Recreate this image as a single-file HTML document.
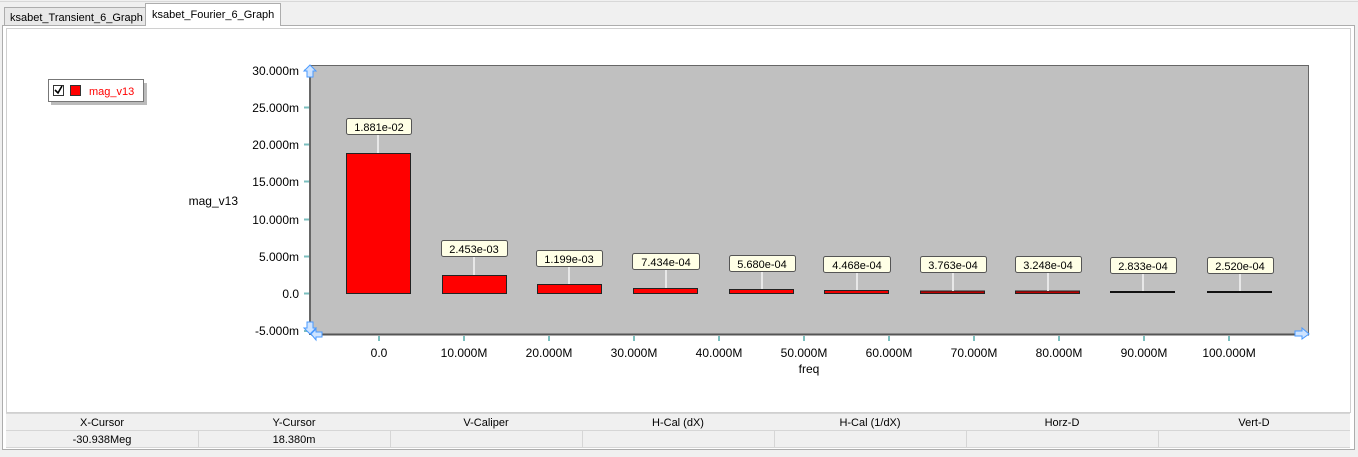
<!DOCTYPE html>
<html><head><style>
body{margin:0;width:1358px;height:452px;overflow:hidden;background:#f0f0f0;font-family:"Liberation Sans",sans-serif;}
</style></head><body>
<svg width="1358" height="452" xmlns="http://www.w3.org/2000/svg" font-family="Liberation Sans, sans-serif">
<rect x="0" y="0" width="1358" height="452" fill="#f0f0f0"/>
<line x1="0" y1="1.5" x2="1358" y2="1.5" stroke="#d8d8d8"/>
<rect x="4.5" y="7.5" width="141" height="18" fill="#e8e8e8" stroke="#adadad"/>
<text x="10" y="21" font-size="11" fill="#000">ksabet_Transient_6_Graph</text>
<rect x="145.5" y="3.5" width="135" height="23" fill="#fff" stroke="#adadad"/>
<text x="152" y="18" font-size="11" fill="#000">ksabet_Fourier_6_Graph</text>
<rect x="2.5" y="25.5" width="1352" height="424" fill="#fff" stroke="#adadad"/>
<line x1="146" y1="25.5" x2="280" y2="25.5" stroke="#fff"/>
<rect x="6.5" y="28.5" width="1344" height="384" fill="#fff" stroke="#d0d0d0"/>
<!-- legend -->
<rect x="51" y="83" width="96" height="22" fill="#bbb"/>
<rect x="48.5" y="79.5" width="95" height="22" fill="#fff" stroke="#777"/>
<rect x="53.5" y="85.5" width="10" height="10" fill="#fff" stroke="#333"/>
<path d="M55 90 L58 93 L62 86" stroke="#000" stroke-width="1.6" fill="none"/>
<rect x="70.5" y="85.5" width="10" height="10" fill="#f00" stroke="#333"/>
<text x="89" y="95" font-size="11" fill="#f00">mag_v13</text>
<!-- plot area -->
<rect x="310.5" y="65.5" width="998" height="269" fill="#c0c0c0" stroke="#666" stroke-width="1"/>
<line x1="311" y1="334.5" x2="1309" y2="334.5" stroke="#555" stroke-width="2"/>
<line x1="310" y1="66" x2="310" y2="335" stroke="#666" stroke-width="2"/>
<g font-size="12" fill="#000" text-anchor="end">
<text x="299" y="75">30.000m</text><text x="299" y="112">25.000m</text>
<text x="299" y="149">20.000m</text><text x="299" y="186">15.000m</text>
<text x="299" y="224">10.000m</text><text x="299" y="261">5.000m</text>
<text x="299" y="298">0.0</text><text x="299" y="335">-5.000m</text>
</g>
<g stroke="#7bbfbf" stroke-width="2">
<line x1="304" y1="70.5" x2="309" y2="70.5"/><line x1="304" y1="107.5" x2="309" y2="107.5"/>
<line x1="304" y1="144.5" x2="309" y2="144.5"/><line x1="304" y1="181.5" x2="309" y2="181.5"/>
<line x1="304" y1="219.5" x2="309" y2="219.5"/><line x1="304" y1="256.5" x2="309" y2="256.5"/>
<line x1="304" y1="293.5" x2="309" y2="293.5"/><line x1="304" y1="331" x2="309" y2="331"/>
</g>
<text x="238" y="205" font-size="12" text-anchor="end">mag_v13</text>
<path d="M307 77 L307 71 L304 71 L310 65 L316 71 L313 71 L313 77 Z" fill="#cfe4ff" stroke="#4a9aff"/>
<path d="M307 322 L307 328 L304 328 L310 334 L316 328 L313 328 L313 322 Z" fill="#cfe4ff" stroke="#4a9aff"/>
<path d="M314 331 L320 331 L320 328 L325 334 L320 339 L320 336 L314 336 Z" fill="#cfe4ff" stroke="#4a9aff" transform="rotate(180 318 334)"/>
<path d="M1295 331 L1302 331 L1302 328 L1309 334 L1302 339 L1302 336 L1295 336 Z" fill="#cfe4ff" stroke="#4a9aff"/>
<!-- x axis -->
<g stroke="#7bbfbf" stroke-width="2">
<line x1="379" y1="336" x2="379" y2="341"/><line x1="464" y1="336" x2="464" y2="341"/>
<line x1="549" y1="336" x2="549" y2="341"/><line x1="634" y1="336" x2="634" y2="341"/>
<line x1="719" y1="336" x2="719" y2="341"/><line x1="804" y1="336" x2="804" y2="341"/>
<line x1="889" y1="336" x2="889" y2="341"/><line x1="974" y1="336" x2="974" y2="341"/>
<line x1="1059" y1="336" x2="1059" y2="341"/><line x1="1144" y1="336" x2="1144" y2="341"/>
<line x1="1229" y1="336" x2="1229" y2="341"/>
</g>
<g font-size="12" text-anchor="middle">
<text x="379" y="357">0.0</text><text x="464" y="357">10.000M</text>
<text x="549" y="357">20.000M</text><text x="634" y="357">30.000M</text>
<text x="719" y="357">40.000M</text><text x="804" y="357">50.000M</text>
<text x="889" y="357">60.000M</text><text x="974" y="357">70.000M</text>
<text x="1059" y="357">80.000M</text><text x="1144" y="357">90.000M</text>
<text x="1229" y="357">100.000M</text>
<text x="809" y="373">freq</text>
</g>
<!-- bars -->
<g stroke="#222" stroke-width="1">
<rect x="346.5" y="153.5" width="64" height="140" fill="#f00"/>
<rect x="442.5" y="275.5" width="64" height="18" fill="#f00"/>
<rect x="537.5" y="284.5" width="64" height="9" fill="#f00"/>
<rect x="633.5" y="288.5" width="64" height="5" fill="#f00"/>
<rect x="729.5" y="289.5" width="64" height="4" fill="#f00"/>
<rect x="824.5" y="290.5" width="64" height="3" fill="#e00"/>
<rect x="920.5" y="291" width="64" height="2.5" fill="#b00"/>
<rect x="1015.5" y="291" width="64" height="2.5" fill="#b00"/>
</g>
<rect x="1110" y="291" width="65" height="2" fill="#111"/>
<rect x="1207" y="291" width="65" height="2" fill="#111"/>
<g stroke="#e8e8e8" stroke-width="2">
<line x1="378" y1="135" x2="378" y2="153"/><line x1="474" y1="257" x2="474" y2="275"/>
<line x1="569" y1="267" x2="569" y2="284"/><line x1="666" y1="270" x2="666" y2="288"/>
<line x1="762" y1="272" x2="762" y2="289"/><line x1="857" y1="273" x2="857" y2="290"/>
<line x1="953" y1="273" x2="953" y2="291"/><line x1="1048" y1="273" x2="1048" y2="291"/>
<line x1="1143" y1="274" x2="1143" y2="291"/><line x1="1240" y1="274" x2="1240" y2="291"/>
</g>
<g font-size="11" text-anchor="middle">
<g><rect x="346.5" y="118.5" width="65" height="16" rx="2" fill="#ffffe6" stroke="#555"/><text x="379" y="131">1.881e-02</text></g>
<g><rect x="441.5" y="240.5" width="66" height="16" rx="2" fill="#ffffe6" stroke="#555"/><text x="474" y="253">2.453e-03</text></g>
<g><rect x="536.5" y="250.5" width="66" height="16" rx="2" fill="#ffffe6" stroke="#555"/><text x="569" y="263">1.199e-03</text></g>
<g><rect x="632.5" y="253.5" width="67" height="16" rx="2" fill="#ffffe6" stroke="#555"/><text x="666" y="266">7.434e-04</text></g>
<g><rect x="729.5" y="255.5" width="66" height="16" rx="2" fill="#ffffe6" stroke="#555"/><text x="762" y="268">5.680e-04</text></g>
<g><rect x="823.5" y="256.5" width="67" height="16" rx="2" fill="#ffffe6" stroke="#555"/><text x="857" y="269">4.468e-04</text></g>
<g><rect x="920.5" y="256.5" width="66" height="16" rx="2" fill="#ffffe6" stroke="#555"/><text x="953" y="269">3.763e-04</text></g>
<g><rect x="1015.5" y="256.5" width="66" height="16" rx="2" fill="#ffffe6" stroke="#555"/><text x="1048" y="269">3.248e-04</text></g>
<g><rect x="1110.5" y="257.5" width="66" height="16" rx="2" fill="#ffffe6" stroke="#555"/><text x="1143" y="270">2.833e-04</text></g>
<g><rect x="1207.5" y="257.5" width="66" height="16" rx="2" fill="#ffffe6" stroke="#555"/><text x="1240" y="270">2.520e-04</text></g>
</g>
<!-- bottom table -->
<rect x="6" y="413" width="1344" height="35" fill="#f0f0f0"/>
<line x1="6" y1="413.5" x2="1350" y2="413.5" stroke="#d6d6d6"/>
<line x1="6" y1="430.5" x2="1350" y2="430.5" stroke="#d6d6d6"/>
<line x1="6" y1="447.5" x2="1350" y2="447.5" stroke="#d6d6d6"/>
<g stroke="#d6d6d6">
<line x1="198.5" y1="431" x2="198.5" y2="447"/><line x1="390.5" y1="431" x2="390.5" y2="447"/>
<line x1="582.5" y1="431" x2="582.5" y2="447"/><line x1="774.5" y1="431" x2="774.5" y2="447"/>
<line x1="966.5" y1="431" x2="966.5" y2="447"/><line x1="1158.5" y1="431" x2="1158.5" y2="447"/>
</g>
<g font-size="11" text-anchor="middle" fill="#000">
<text x="102" y="426">X-Cursor</text><text x="294" y="426">Y-Cursor</text>
<text x="486" y="426">V-Caliper</text><text x="678" y="426">H-Cal (dX)</text>
<text x="870" y="426">H-Cal (1/dX)</text><text x="1062" y="426">Horz-D</text>
<text x="1254" y="426">Vert-D</text>
<text x="102" y="443">-30.938Meg</text><text x="294" y="443">18.380m</text>
</g>
</svg>
</body></html>
